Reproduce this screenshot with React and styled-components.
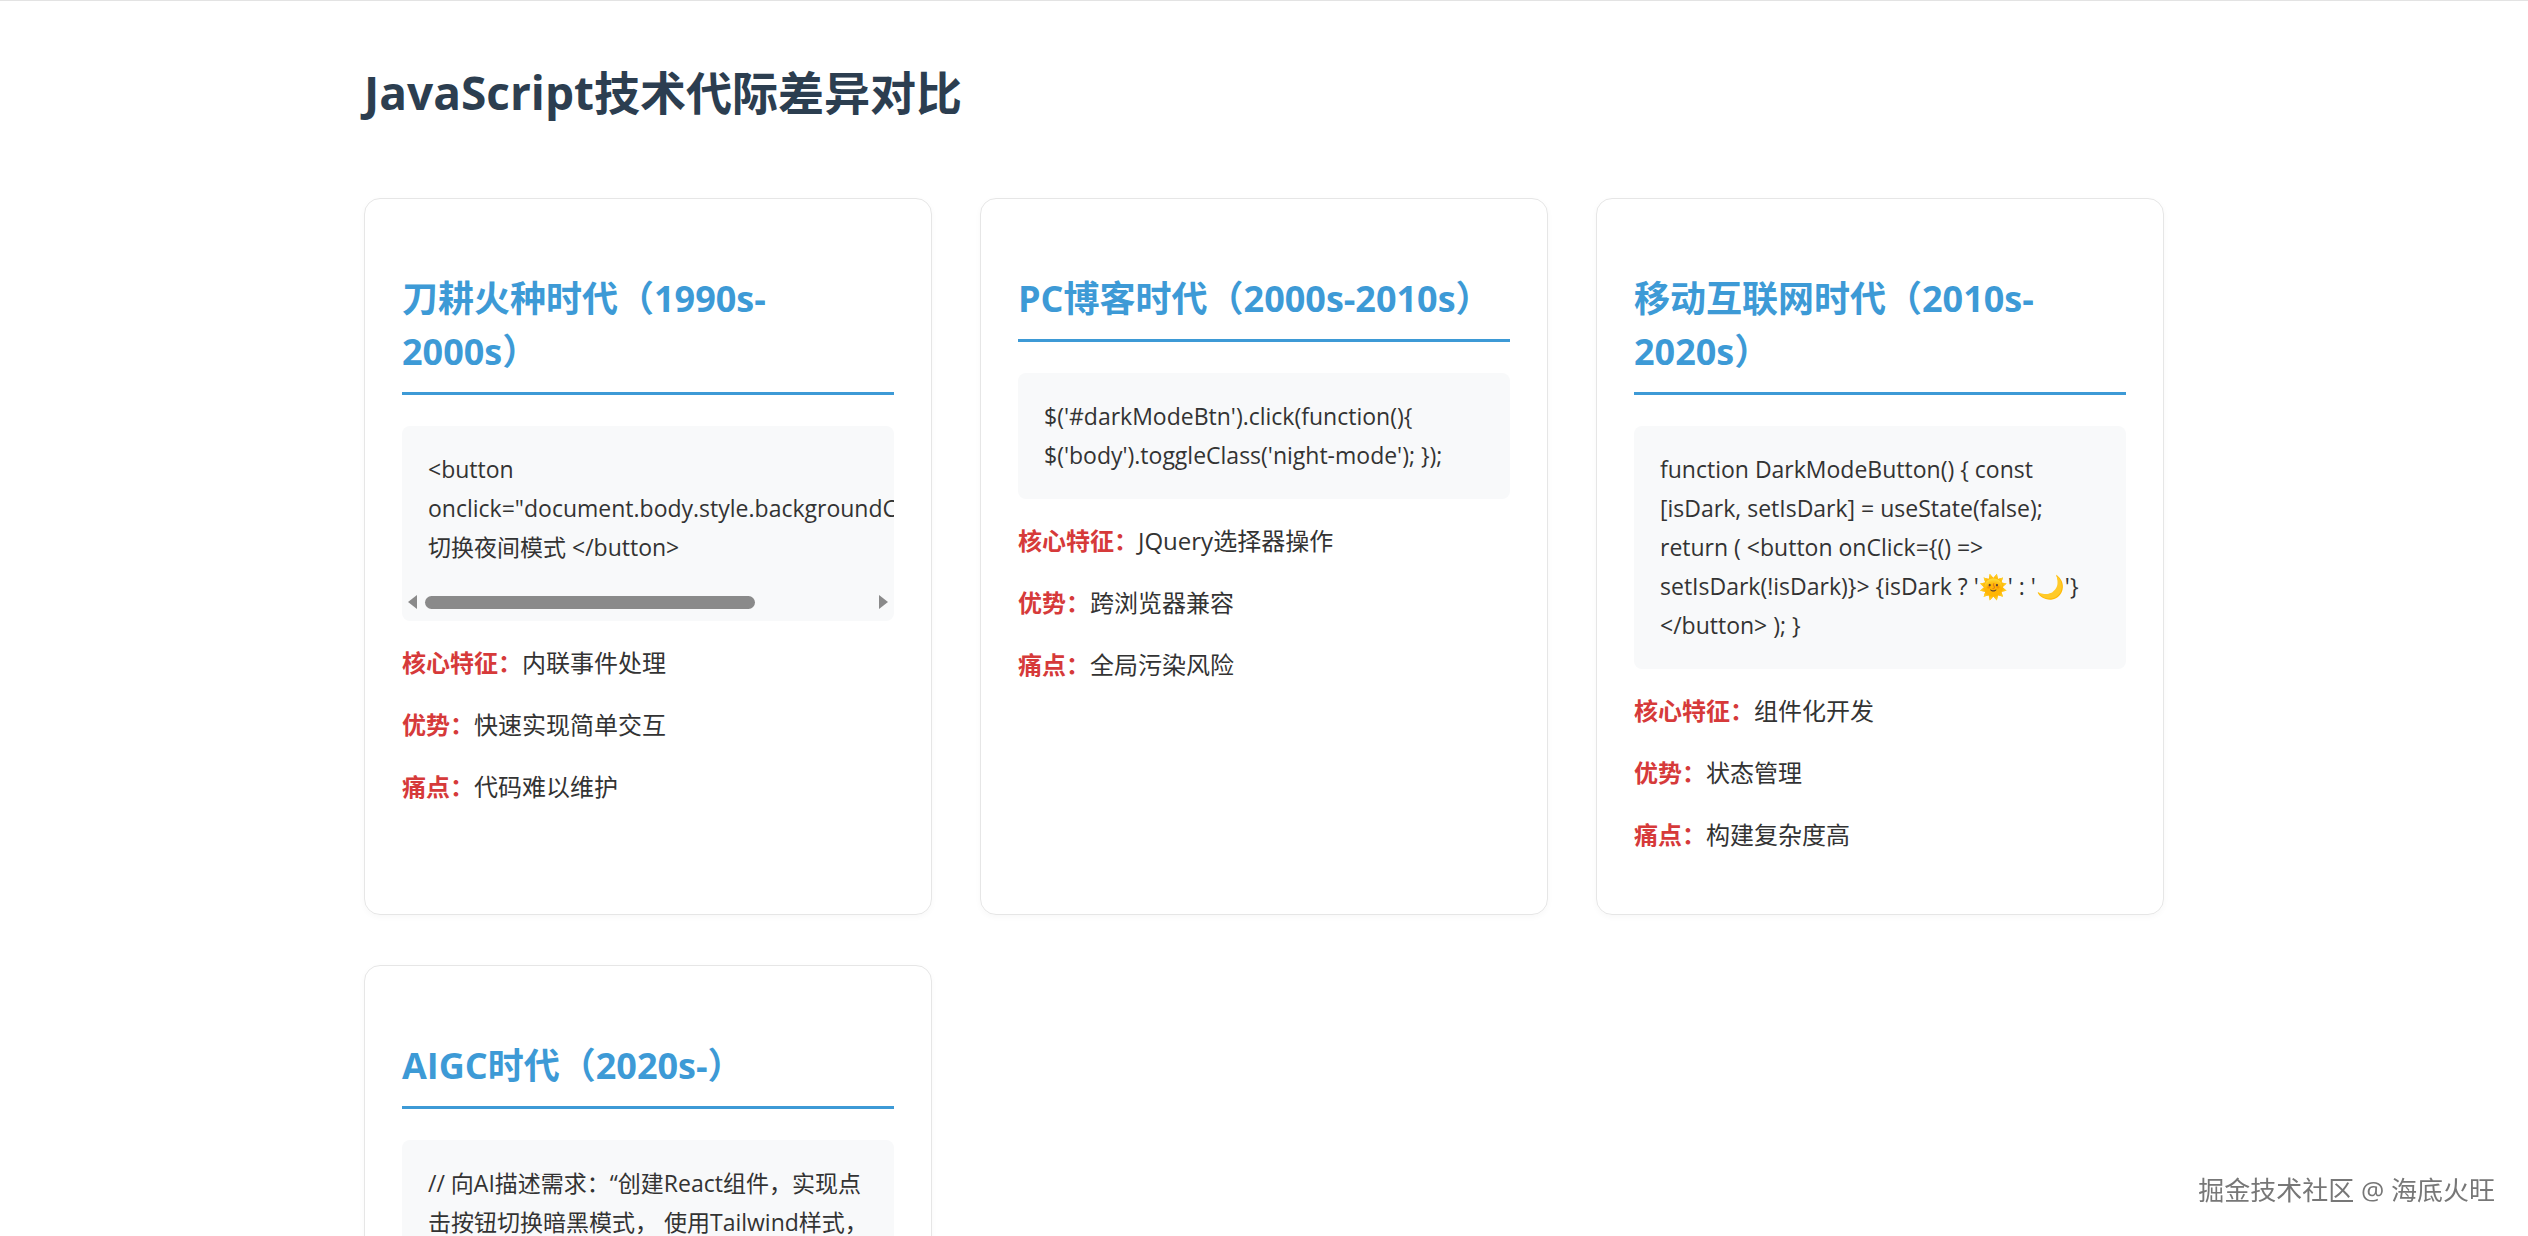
import styled, { createGlobalStyle } from "styled-components";

const GlobalStyle = createGlobalStyle`
  html, body {
    margin: 0;
    padding: 0;
    background: #ffffff;
    overflow: hidden;
    font-family: "Open Sans", "Noto Sans CJK SC", sans-serif;
  }
  body {
    border-top: 1px solid #e3e3e3;
  }
`;

const Page = styled.div`
  width: 1800px;
  margin: 0 auto;
  padding-top: 64px;
`;

const Title = styled.h1`
  margin: 0 0 78px;
  font-size: 46px;
  line-height: 55px;
  font-weight: 700;
  color: #2c3e50;
`;

const Grid = styled.div`
  display: grid;
  grid-template-columns: repeat(3, 568px);
  column-gap: 48px;
  row-gap: 50px;
`;

const Card = styled.div`
  border: 1px solid #e6e6e6;
  border-radius: 16px;
  padding: 37px;
  box-shadow: 0 2px 6px rgba(0, 0, 0, 0.03);
  min-width: 0;
`;

const Heading = styled.h2`
  margin: 36px 0 31px;
  padding-bottom: 14px;
  border-bottom: 3px solid #3d9ad6;
  font-size: 36px;
  line-height: 53px;
  font-weight: 700;
  color: #3d9ad6;
  white-space: pre-line;
`;

const CodeBox = styled.div`
  background: #f8f9fa;
  border-radius: 8px;
  overflow: hidden;
`;

const Code = styled.div`
  padding: 24px 26px;
  font-size: 23px;
  line-height: 39px;
  color: #333;
  white-space: ${({ $nowrapLong }) => ($nowrapLong ? "normal" : "normal")};
  overflow: hidden;
`;

const Scrollbar = styled.div`
  display: flex;
  align-items: center;
  gap: 8px;
  height: 22px;
  padding: 0 6px 8px;
`;

const Arrow = styled.span`
  width: 0;
  height: 0;
  border-top: 7px solid transparent;
  border-bottom: 7px solid transparent;
  ${({ $dir }) =>
    $dir === "left"
      ? "border-right: 9px solid #8a8a8a;"
      : "border-left: 9px solid #8a8a8a; margin-left: auto;"}
`;

const Thumb = styled.span`
  width: 330px;
  height: 13px;
  border-radius: 7px;
  background: #8a8a8a;
`;

const Row = styled.p`
  margin: 22px 0;
  font-size: 24px;
  line-height: 40px;
  color: #333;
`;

const Key = styled.strong`
  color: #d63a3a;
  font-weight: 700;
`;

const Watermark = styled.div`
  position: fixed;
  right: 33px;
  bottom: 28px;
  font-size: 26px;
  color: #777;
  text-shadow: 0 0 2px #fff;
`;

const eras = [
  {
    title: "刀耕火种时代（1990s-\n2000s）",
    code: '<button onclick="document.body.style.backgroundColor=\'#333\'"> 切换夜间模式 </button>',
    scroll: true,
    core: "内联事件处理",
    pro: "快速实现简单交互",
    pain: "代码难以维护",
  },
  {
    title: "PC博客时代（2000s-2010s）",
    code: "$('#darkModeBtn').click(function(){ $('body').toggleClass('night-mode'); });",
    core: "JQuery选择器操作",
    pro: "跨浏览器兼容",
    pain: "全局污染风险",
  },
  {
    title: "移动互联网时代（2010s-2020s）",
    code: "function DarkModeButton() { const [isDark, setIsDark] = useState(false); return ( <button onClick={() => setIsDark(!isDark)}> {isDark ? '🌞' : '🌙'} </button> ); }",
    core: "组件化开发",
    pro: "状态管理",
    pain: "构建复杂度高",
  },
  {
    title: "AIGC时代（2020s-）",
    code: "// 向AI描述需求：“创建React组件，实现点击按钮切换暗黑模式， 使用Tailwind样式，并记住用户偏好”",
    core: "自然语言编程",
    pro: "开发效率极高",
    pain: "需要审查生成代码",
  },
];

export default function App() {
  return (
    <>
      <GlobalStyle />
      <Page>
        <Title>JavaScript技术代际差异对比</Title>
        <Grid>
          {eras.map((e) => (
            <Card key={e.title}>
              <Heading>{e.title}</Heading>
              <CodeBox>
                <Code>{e.code}</Code>
                {e.scroll && (
                  <Scrollbar>
                    <Arrow $dir="left" />
                    <Thumb />
                    <Arrow $dir="right" />
                  </Scrollbar>
                )}
              </CodeBox>
              <Row>
                <Key>核心特征：</Key>
                {e.core}
              </Row>
              <Row>
                <Key>优势：</Key>
                {e.pro}
              </Row>
              <Row>
                <Key>痛点：</Key>
                {e.pain}
              </Row>
            </Card>
          ))}
        </Grid>
      </Page>
      <Watermark>掘金技术社区 @ 海底火旺</Watermark>
    </>
  );
}
